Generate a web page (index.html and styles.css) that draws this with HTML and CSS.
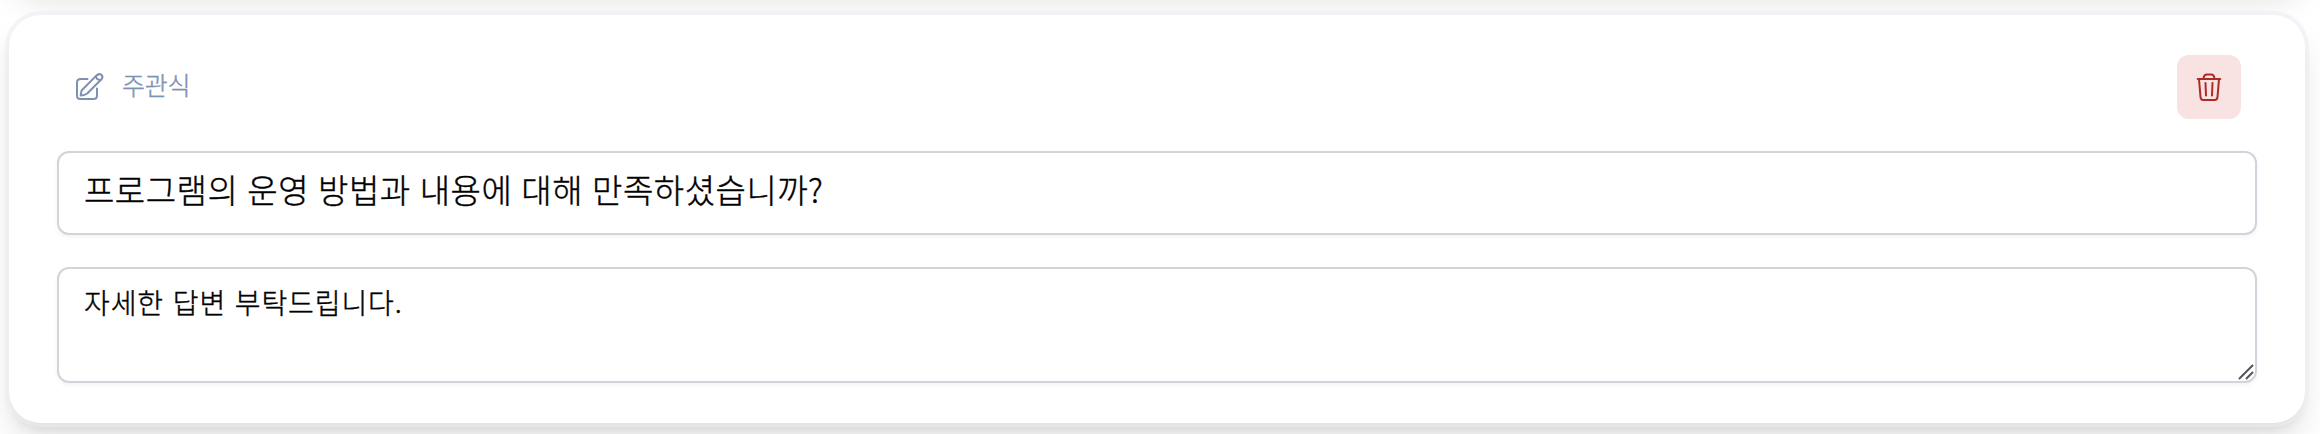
FILE: index.html
```html
<!DOCTYPE html>
<html lang="ko">
<head>
<meta charset="utf-8">
<title>주관식</title>
<link rel="stylesheet" href="styles.css">
</head>
<body>
<div class="list">
  <section class="card card-previous"></section>
  <section class="card">
    <header class="card-header">
      <div class="kind">
        <svg class="kind-icon" width="36" height="36" viewBox="0 0 36 36">
          <path d="M15.5 11H8.5Q5 11 5 14.500V27.500Q5 31 8.500 31H21.500Q25 31 25 27.500V20.500"/>
          <path d="M8.600 27.400L9.600 22.500L23.800 8.100Q26.500 5.400 28.800 6.400Q31.400 8.100 29.900 10.800L15.500 25.200Q12.500 27.600 8.600 27.400Z"/>
          <path d="M24 8.300Q24.300 12.300 28.800 12"/>
        </svg>
        <span class="kind-label">주관식</span>
      </div>
      <button class="delete" type="button" aria-label="삭제">
        <svg class="delete-icon" width="28" height="32" viewBox="0 0 28 32">
          <path d="M2.700 8H25.300M4 8L5.500 26Q5.800 29 8.200 29H19.800Q22.200 29 22.500 26L24 8M8.600 7.600Q8.800 3.500 12 3.500H16Q19.200 3.500 19.400 7.600M10.500 12L11 24.500M17.500 12L17 24.500"/>
        </svg>
      </button>
    </header>
    <input class="field title" type="text" value="프로그램의 운영 방법과 내용에 대해 만족하셨습니까?">
    <div class="answer">
      <textarea class="field detail">자세한 답변 부탁드립니다.</textarea>
      <svg class="grip" width="16" height="16" viewBox="0 0 16 16"><path d="M1.500 14.500L14.500 1.500M8.500 14.500L14.500 8.500"/></svg>
    </div>
  </section>
</div>
</body>
</html>
```
FILE: styles.css
```css
* { box-sizing: border-box; }
body {
  margin: 0;
  height: 434px;
  overflow: hidden;
  background: #fff;
  font-family: "Noto Sans CJK KR", sans-serif;
  font-weight: 300;
}
.list {
  display: flex;
  flex-direction: column;
  gap: 32px;
  margin-top: -425px;
  padding: 0 15px 0 9px;
}
.card {
  height: 408px;
  flex: none;
  padding: 40px 48px;
  border-radius: 32px;
  background: #fff;
  box-shadow: 0 0 0 4px rgba(236, 239, 243, .6), 0 20px 30px 0 rgba(0, 0, 0, .1), 0 8px 12px -4px rgba(0, 0, 0, .1);
}
.card-header {
  display: flex;
  align-items: center;
  justify-content: space-between;
  height: 64px;
  padding: 0 16px 2px 15px;
  padding-bottom: 0;
}
.kind {
  display: flex;
  align-items: center;
  gap: 14px;
  padding-bottom: 2px;
  color: #7d91b2;
}
.kind-icon, .delete-icon, .grip {
  display: block;
  fill: none;
  stroke: currentColor;
  stroke-width: 2;
  stroke-linecap: round;
  stroke-linejoin: round;
}
.kind-label {
  padding-bottom: 4px;
  font-size: 25px;
  line-height: 36px;
  letter-spacing: -.3px;
  -webkit-text-stroke: .4px currentColor;
}
.delete {
  display: grid;
  place-items: center;
  width: 64px;
  height: 64px;
  padding: 0;
  border: 0;
  border-radius: 12px;
  background: #f8e2e2;
  color: #ad2a26;
}
.field {
  display: block;
  width: 100%;
  border: 2px solid #d1d5db;
  border-radius: 12px;
  background: #fff;
  box-shadow: 0 2px 4px rgba(0, 0, 0, .05);
  color: #000;
  font-family: inherit;
  font-weight: inherit;
  outline: 0;
  -webkit-text-stroke: .4px currentColor;
}
.title {
  height: 84px;
  margin-top: 32px;
  padding: 0 25px 8px;
  font-size: 33px;
  letter-spacing: .5px;
  word-spacing: -.7px;
}
.answer {
  position: relative;
  margin-top: 32px;
}
.detail {
  height: 116px;
  padding: 13px 25px;
  overflow: hidden;
  resize: none;
  font-size: 28px;
  line-height: 40px;
  letter-spacing: .9px;
}
.grip {
  position: absolute;
  right: 3px;
  bottom: 3px;
  color: #555;
}
```
